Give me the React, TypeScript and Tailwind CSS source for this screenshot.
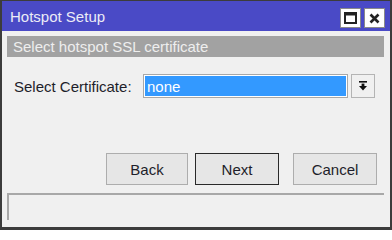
export default function App() {
  return (
    <div
      className="w-[392px] h-[230px] flex flex-col bg-[#f0f0f0] border-x-[2px] border-b-[3px] border-t border-[#3c3c3c] text-[15px] text-[#1e1e2a] overflow-hidden"
      style={{ fontFamily: '"Liberation Sans", Arial, sans-serif' }}
    >
      {/* title bar */}
      <div className="h-[30px] shrink-0 flex items-center justify-between bg-[#4a4ac6] pl-[8px] pr-[5px]">
        <span className="text-[#ececf6] text-[15px] leading-none pt-[1px]">Hotspot Setup</span>
        <div className="flex gap-[3px] mt-[4px]">
          <div className="w-[21px] h-[20px] bg-white border border-[#8a8a8a] flex items-center justify-center">
            <svg width="13" height="12" viewBox="0 0 13 12">
              <rect x="1" y="1" width="11" height="10" fill="none" stroke="#222" strokeWidth="2" />
              <rect x="1" y="1" width="11" height="2.5" fill="#222" />
            </svg>
          </div>
          <div className="w-[21px] h-[20px] bg-white border border-[#8a8a8a] flex items-center justify-center">
            <svg width="11" height="11" viewBox="0 0 11 11">
              <path d="M1.5 1.5 L9.5 9.5 M9.5 1.5 L1.5 9.5" stroke="#222" strokeWidth="2.6" />
            </svg>
          </div>
        </div>
      </div>

      <div className="flex-1 flex flex-col pl-[5px] pr-[6px]">
        {/* section header */}
        <div className="mt-[5px] h-[21px] bg-[#a2a2a2] text-[#eeeeee] flex items-center pl-[6px] leading-none">
          Select hotspot SSL certificate
        </div>

        {/* certificate row */}
        <div className="mt-[17px] h-[24px] flex items-center">
          <span className="pl-[7px] w-[136px] leading-none">Select Certificate:</span>
          <div className="w-[205px] h-[24px] border border-[#a8a8a8] bg-white p-[1px]">
            <div className="h-full bg-[#3399ff] text-white flex items-center pl-[2px] leading-none">none</div>
          </div>
          <div className="ml-[3px] w-[24px] h-[24px] border border-[#b4b4b4] bg-[#f0f0f0] flex items-center justify-center">
            <svg width="8" height="10" viewBox="0 0 8 10">
              <rect x="0" y="0" width="8" height="1.6" fill="#111" />
              <rect x="2.6" y="2.6" width="2.8" height="3" fill="#111" />
              <path d="M0 5 L8 5 L4 9.5 Z" fill="#111" />
            </svg>
          </div>
        </div>

        {/* buttons */}
        <div className="mt-[55px] flex justify-end pr-[7px]">
          <button className="w-[82px] h-[32px] bg-[#e6e6e6] border border-[#adadad] leading-none text-[#1e1e2a]">Back</button>
          <button className="ml-[7px] w-[84px] h-[32px] bg-[#e6e6e6] border-[1.5px] border-[#2a2a2a] leading-none text-[#1e1e2a]">Next</button>
          <button className="ml-[14px] w-[84px] h-[32px] bg-[#e6e6e6] border border-[#adadad] leading-none text-[#1e1e2a]">Cancel</button>
        </div>

        {/* status bar */}
        <div className="mt-[8px] h-[27px] border-t-2 border-l-2 border-[#a8a8a8] bg-[#f0f0f0]" />
      </div>
    </div>
  );
}
